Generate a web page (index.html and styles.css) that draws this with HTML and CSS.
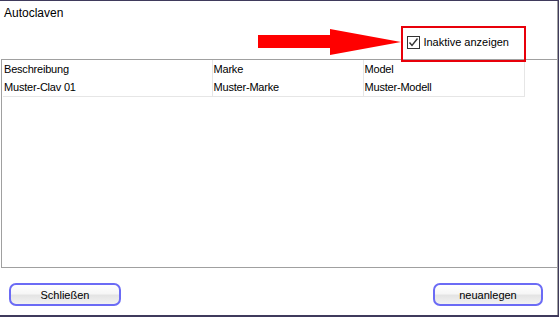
FILE: index.html
```html
<!DOCTYPE html>
<html lang="de">
<head>
    <meta charset="UTF-8">
    <title>Autoclaven</title>
    <link rel="stylesheet" href="styles.css">
</head>
<body>
    <div class="dialog">
        <div class="header">
            <div class="title">Autoclaven</div>
            <div class="toolbar">
                <span class="callout">
                    <svg class="arrow" width="143" height="28" viewBox="0 0 143 28">
                        <polygon points="0,7 72,7 72,1 143,14 72,27 72,20 0,20" fill="#ff0000"/>
                    </svg>
                    <label class="check">
                        <span class="check-box">
                            <svg width="11" height="11" viewBox="0 0 11 11">
                                <polyline points="1.5,5.5 4,8.5 9.5,1.5" fill="none" stroke="#333" stroke-width="1.4"/>
                            </svg>
                        </span>
                        <span>Inaktive anzeigen</span>
                    </label>
                </span>
            </div>
        </div>

        <div class="pane">
            <table class="grid">
                <tr>
                    <td class="col-desc">Beschreibung</td>
                    <td class="col-brand">Marke</td>
                    <td class="col-model">Model</td>
                </tr>
                <tr class="row-last">
                    <td>Muster-Clav 01</td>
                    <td>Muster-Marke</td>
                    <td>Muster-Modell</td>
                </tr>
            </table>
        </div>

        <div class="footer">
            <button class="btn btn-close">Schließen</button>
            <button class="btn btn-new">neuanlegen</button>
        </div>
    </div>
</body>
</html>
```

FILE: styles.css
```css
* {
    margin: 0;
    padding: 0;
    box-sizing: border-box;
}

body {
    background: #3f3a5c;
    font-family: "Liberation Sans", Arial, sans-serif;
    font-size: 11px;
    color: #000;
    padding-top: 1px;
    width: 559px;
    height: 317px;
    overflow: hidden;
}

.dialog {
    width: 558px;
    height: 314px;
    background: #fff;
    border-right: 1px solid #a0a0a0;
    display: flex;
    flex-direction: column;
}

.header {
    height: 58px;
    padding: 5px 0 0 4px;
}

.title {
    font-size: 12px;
    line-height: 15px;
}

.toolbar {
    display: flex;
    justify-content: flex-end;
    padding: 14px 48px 0 0;
}

.callout {
    position: relative;
    display: inline-flex;
}

/* roter Rahmen um die Checkbox */
.callout::after {
    content: "";
    position: absolute;
    top: -9px;
    left: -6px;
    right: -17px;
    bottom: -13px;
    border: 2px solid #e8000a;
}

.arrow {
    position: absolute;
    right: calc(100% + 6px);
    top: -7px;
}

.check {
    display: inline-flex;
    align-items: center;
    gap: 3px;
    line-height: 14px;
}

.check-box {
    width: 13px;
    height: 13px;
    border: 1px solid #333;
    display: inline-flex;
    align-items: center;
    justify-content: center;
    background: #fff;
}

.pane {
    height: 209px;
    border: 1px solid #a0a0a0;
    border-right: none;
    margin-left: 1px;
}

.grid {
    border-collapse: collapse;
    margin-left: 1px;
    letter-spacing: -0.2px;
}

.grid td {
    height: 18px;
    padding: 0 2px 0 1px;
    border-right: 1px solid #e6e6e6;
    white-space: nowrap;
    vertical-align: middle;
}

.row-last td {
    height: 18px;
    border-bottom: 1px solid #e6e6e6;
}

.col-desc {
    width: 209px;
}

.col-brand {
    width: 151px;
}

.col-model {
    width: 161px;
}

.footer {
    flex: 1;
    display: flex;
    justify-content: space-between;
    align-items: flex-start;
    padding: 15px 14px 0 9px;
}

.btn {
    height: 23px;
    border: 2px solid #6b6bf5;
    border-radius: 7px;
    background: linear-gradient(#ffffff 0%, #f6f6f6 45%, #e4e4e4 55%, #f2f2f2 100%);
    font-family: "Liberation Sans", Arial, sans-serif;
    font-size: 11px;
    color: #000;
}

.btn-close {
    width: 112px;
}

.btn-new {
    width: 110px;
}
```
